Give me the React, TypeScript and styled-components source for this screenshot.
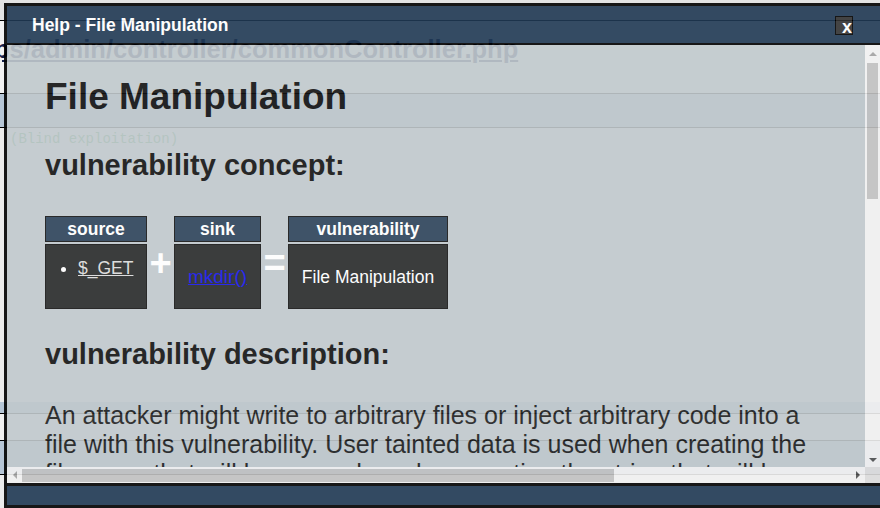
import React from "react";
import styled, { createGlobalStyle, css } from "styled-components";

const Global = createGlobalStyle`
  html, body { margin: 0; padding: 0; }
  body {
    width: 880px;
    height: 508px;
    overflow: hidden;
    background: #e3e3e3;
    font-family: "Liberation Sans", Arial, sans-serif;
  }
`;

const Page = styled.div`
  position: relative;
  width: 880px;
  height: 508px;
  overflow: hidden;
  display: flex;
  flex-direction: column;
`;

const BgRow = styled.div<{ $h: number; $bg: string; $line?: boolean }>`
  flex: none;
  height: ${(p) => p.$h}px;
  box-sizing: border-box;
  background: ${(p) => p.$bg};
  border-bottom: ${(p) => (p.$line ? "1px solid #000" : "none")};
  overflow: hidden;
  white-space: nowrap;
`;

const BgLink = styled.a`
  display: block;
  margin: 14px 0 0 -6px;
  font: bold 25.5px/29px "Liberation Sans", Arial, sans-serif;
  color: #14204a;
  text-decoration: underline;
`;

const BgMono = styled.div`
  padding: 3px 0 0 10px;
  font: 14px/16px "Liberation Mono", "Courier New", monospace;
  color: #3f9a4f;
`;

const Dialog = styled.div`
  position: absolute;
  left: 4px;
  top: 3px;
  width: 873px;
  height: 499px;
  border: 3px solid #000;
  display: flex;
  flex-direction: column;
  opacity: 0.9;
`;

const TitleBar = styled.div`
  flex: none;
  height: 39px;
  box-sizing: border-box;
  border-bottom: 2px solid #000;
  background: #203954;
  display: flex;
  align-items: center;
  justify-content: space-between;
  padding: 0 27px 0 25px;
`;

const Title = styled.span`
  color: #fff;
  font: bold 17.5px/20px "Liberation Sans", Arial, sans-serif;
`;

const CloseButton = styled.button`
  width: 18px;
  height: 19px;
  box-sizing: border-box;
  margin-top: 2px;
  padding: 1px 0 0 0;
  border: 1px solid #000;
  background: #323232;
  color: #fff;
  font: bold 18px/18px "Liberation Sans", Arial, sans-serif;
  text-align: right;
  overflow: visible;
  cursor: pointer;
`;

/* content area with its scrollbars */
const ContentArea = styled.div`
  flex: 1;
  min-height: 0;
  display: grid;
  grid-template-columns: 1fr 15px;
  grid-template-rows: 1fr 16px;
  background: #c1c9cd;
`;

const Viewport = styled.div`
  overflow: hidden;
  padding: 31px 38px 0;
  color: #121212;
`;

const VScroll = styled.div`
  display: flex;
  flex-direction: column;
  background: #f1f1f1;
`;

const HScroll = styled.div`
  display: flex;
  background: #f1f1f1;
`;

const Corner = styled.div`
  background: #dcdcdc;
`;

const ScrollButton = styled.div<{ $size?: number; $vertical?: boolean }>`
  flex: none;
  ${(p) =>
    p.$vertical
      ? css`
          height: ${p.$size ?? 15}px;
        `
      : css`
          width: ${p.$size ?? 15}px;
        `}
  display: flex;
  align-items: center;
  justify-content: center;
`;

type Dir = "up" | "down" | "left" | "right";

const Arrow = styled.span<{ $dir: Dir; $color: string }>`
  width: 0;
  height: 0;
  border: 4px solid transparent;
  ${(p) => {
    switch (p.$dir) {
      case "up":
        return css`
          border-top-width: 0;
          border-bottom-color: ${p.$color};
        `;
      case "down":
        return css`
          border-bottom-width: 0;
          border-top-color: ${p.$color};
        `;
      case "left":
        return css`
          border-left-width: 0;
          border-right-color: ${p.$color};
        `;
      default:
        return css`
          border-right-width: 0;
          border-left-color: ${p.$color};
        `;
    }
  }}
`;

const Track = styled.div<{ $vertical?: boolean }>`
  flex: 1;
  display: flex;
  flex-direction: ${(p) => (p.$vertical ? "column" : "row")};
`;

const Thumb = styled.div<{ $vertical?: boolean }>`
  flex: none;
  background: #c1c1c1;
  ${(p) =>
    p.$vertical
      ? css`
          margin: 1px 2px 0;
        `
      : css`
          margin: 2px 0 0;
          height: 13px;
        `}
`;

const H1 = styled.h1`
  margin: 0 0 31px;
  font: bold 37px/42px "Liberation Sans", Arial, sans-serif;
`;

const H2 = styled.h2<{ $top?: number }>`
  margin: ${(p) => p.$top ?? 0}px 0 0;
  font: bold 29px/33px "Liberation Sans", Arial, sans-serif;
`;

const Flow = styled.div`
  display: grid;
  grid-template-columns: 102px 27px 87px 27px 160px;
  grid-template-rows: 26px 65px;
  row-gap: 2px;
  margin-top: 34px;
`;

const FlowHead = styled.div<{ $col: number }>`
  grid-row: 1;
  grid-column: ${(p) => p.$col};
  box-sizing: border-box;
  border: 1px solid #161616;
  background: #2d435a;
  color: #fff;
  font: bold 17.5px/20px "Liberation Sans", Arial, sans-serif;
  display: flex;
  align-items: center;
  justify-content: center;
`;

const FlowBody = styled.div<{ $col: number; $top?: boolean }>`
  grid-row: 2;
  grid-column: ${(p) => p.$col};
  box-sizing: border-box;
  border: 1px solid #161616;
  background: #282b2b;
  color: #fff;
  font: 17.5px/20px "Liberation Sans", Arial, sans-serif;
  display: flex;
  align-items: ${(p) => (p.$top ? "flex-start" : "center")};
  justify-content: ${(p) => (p.$top ? "flex-start" : "center")};
`;

const Operator = styled.div<{ $col: number }>`
  grid-row: 1 / 3;
  grid-column: ${(p) => p.$col};
  align-self: center;
  justify-self: center;
  color: #fff;
  font: bold 38px/44px "Liberation Sans", Arial, sans-serif;
`;

const SourceList = styled.ul`
  margin: 13px 0 0;
  padding: 0 0 0 32px;
  list-style: disc;
`;

const SourceLink = styled.a`
  color: #dcdcdc;
  text-decoration: underline;
`;

const SinkLink = styled.a`
  margin-top: 1px;
  color: #1414ee;
  font-size: 19px;
  text-decoration: underline;
`;

const Para = styled.p<{ $top?: number }>`
  margin: ${(p) => p.$top ?? 0}px 0 0;
  max-width: 782px;
  font: 25px/29px "Liberation Sans", Arial, sans-serif;
  color: #1f1f1f;
`;

const Footer = styled.div`
  flex: none;
  height: 22px;
  box-sizing: border-box;
  border-top: 3px solid #000;
  background: #203954;
`;

export default function App() {
  return (
    <>
      <Global />
      <Page>
        <BgRow $h={21} $bg="#e3e3e3" $line />
        <BgRow $h={73} $bg="#f2f2f2" $line>
          <BgLink href="#">ps/admin/controller/commonController.php</BgLink>
        </BgRow>
        <BgRow $h={34} $bg="#b6c6d6" $line />
        <BgRow $h={274} $bg="#ececec">
          <BgMono>(Blind exploitation)</BgMono>
        </BgRow>
        <BgRow $h={12} $bg="#b6c6d6" $line />
        <BgRow $h={27} $bg="#f0f0f0" $line />
        <BgRow $h={34} $bg="#b6c6d6" $line />
        <BgRow $h={40} $bg="#ececec" />

        <Dialog>
          <TitleBar>
            <Title>Help - File Manipulation</Title>
            <CloseButton>x</CloseButton>
          </TitleBar>
          <ContentArea>
            <Viewport>
              <H1>File Manipulation</H1>
              <H2>vulnerability concept:</H2>
              <Flow>
                <FlowHead $col={1}>source</FlowHead>
                <FlowHead $col={3}>sink</FlowHead>
                <FlowHead $col={5}>vulnerability</FlowHead>
                <FlowBody $col={1} $top>
                  <SourceList>
                    <li>
                      <SourceLink href="#">$_GET</SourceLink>
                    </li>
                  </SourceList>
                </FlowBody>
                <Operator $col={2}>+</Operator>
                <FlowBody $col={3}>
                  <SinkLink href="#">mkdir()</SinkLink>
                </FlowBody>
                <Operator $col={4}>=</Operator>
                <FlowBody $col={5}>File Manipulation</FlowBody>
              </Flow>
              <H2 $top={29}>vulnerability description:</H2>
              <Para $top={30}>
                An attacker might write to arbitrary files or inject arbitrary code into a file with
                this vulnerability. User tainted data is used when creating the file name that will
                be opened or when creating the string that will be written to the file.
              </Para>
            </Viewport>
            <VScroll>
              <ScrollButton $vertical $size={17}>
                <Arrow $dir="up" $color="#a3a3a3" />
              </ScrollButton>
              <Track $vertical>
                <Thumb $vertical style={{ height: 136 }} />
              </Track>
              <ScrollButton $vertical>
                <Arrow $dir="down" $color="#505050" />
              </ScrollButton>
            </VScroll>
            <HScroll>
              <ScrollButton>
                <Arrow $dir="left" $color="#a3a3a3" />
              </ScrollButton>
              <Track>
                <Thumb style={{ width: 592 }} />
              </Track>
              <ScrollButton>
                <Arrow $dir="right" $color="#505050" />
              </ScrollButton>
            </HScroll>
            <Corner />
          </ContentArea>
          <Footer />
        </Dialog>
      </Page>
    </>
  );
}
